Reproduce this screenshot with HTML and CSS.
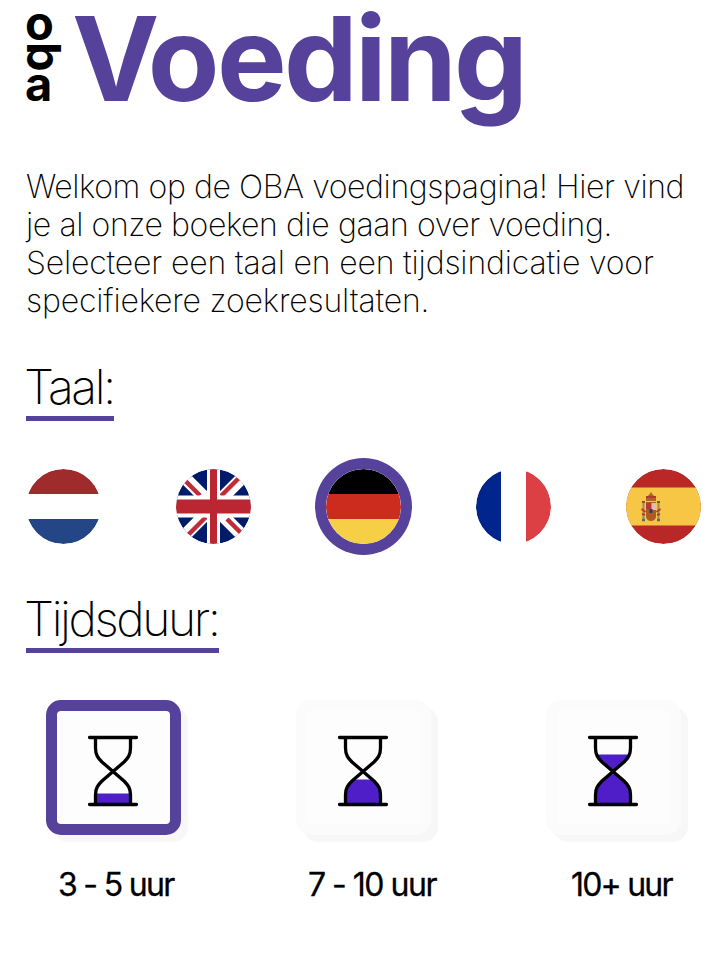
FILE: index.html
```
<!DOCTYPE html>
<html lang="nl">
<head>
<meta charset="utf-8">
<title>OBA Voeding</title>
<link rel="stylesheet" href="styles.css">
</head>
<body>
<svg class="defs" aria-hidden="true">
  <defs>
    <clipPath id="round"><circle cx="37.5" cy="37.5" r="37.5"/></clipPath>
    <g id="glass" fill="none" stroke="#000" stroke-width="3.300">
      <path d="M7.500 2V13C7.500 20 10 23 14 27L36 46C40 50 42.500 53 42.500 60V69M42.500 2V13C42.500 20 40 23 36 27L14 46C10 50 7.500 53 7.500 60V69"/>
      <path d="M1.500 2.500H48.500M1.500 69.500H48.500" stroke-linecap="round"/>
    </g>
    <clipPath id="glass-shape"><path d="M7.500 2V13C7.500 20 10 23 14 27L25 36.500 14 46C10 50 7.500 53 7.500 60V69H42.500V60C42.500 53 40 50 36 46L25 36.500 36 27C40 23 42.500 20 42.500 13V2Z"/></clipPath>
  </defs>
</svg>
<header class="header">
  <svg class="logo" viewBox="0 0 40 100" role="img" aria-label="oba">
    <text class="logo-letter" x="-1" y="31.500">o</text>
    <text class="logo-letter" transform="translate(0.500 34) rotate(90)" x="0" y="0">b</text>
    <text class="logo-letter" x="-1" y="93">a</text>
  </svg>
  <h1 class="title"><span class="title-initial">V</span>oeding</h1>
</header>
<main class="main">
  <p class="intro"><span class="tight">Welkom op de OBA voedingspagina! Hier vind<br>je al onze boeken die gaan over voeding.</span><br>Selecteer een taal en een tijdsindicatie voor<br>specifiekere zoekresultaten.</p>

  <h2 class="heading">Taal:</h2>
  <div class="flags">
    <svg class="flag" viewBox="0 0 75 75"><g clip-path="url(#round)"><path fill="#fff" d="M0 0h75v75H0z"/><path fill="#a02b2c" d="M0 0h75v25H0z"/><path fill="#244686" d="M0 50h75v25H0z"/></g></svg>
    <svg class="flag" viewBox="0 0 75 75"><g clip-path="url(#round)">
      <path fill="#001b69" d="M0 0h75v75H0z"/>
      <path stroke="#fff" stroke-width="12.500" d="M0 0L75 75M75 0L0 75"/>
      <path stroke="#c22b38" stroke-width="4.500" d="M0 2.500L24 26.500M72 0L45 27M3 75L30 48M51 50L76 75"/>
      <path fill="#fff" d="M31 0h13v75H31zM0 26.500h75v22H0z"/>
      <path fill="#ba2732" d="M34 0h7v75h-7zM0 30.500h75v14H0z"/>
    </g></svg>
    <svg class="flag flag-selected" viewBox="0 0 75 75"><g clip-path="url(#round)"><path d="M0 0h75v25H0z"/><path fill="#cc2c1e" d="M0 25h75v25H0z"/><path fill="#f7cf46" d="M0 50h75v25H0z"/></g></svg>
    <svg class="flag" viewBox="0 0 75 75"><g clip-path="url(#round)"><path fill="#fff" d="M25 0h25v75H25z"/><path fill="#00268e" d="M0 0h25v75H0z"/><path fill="#dc4044" d="M50 0h25v75H50z"/></g></svg>
    <svg class="flag" viewBox="0 0 75 75"><g clip-path="url(#round)">
      <path fill="#b92727" d="M0 0h75v75H0z"/><path fill="#f6c644" d="M0 18.500h75v38H0z"/>
      <path fill="#a9652c" d="M20 32V28L23 26 25 23 27 26 30 28V32Z"/>
      <path fill="#b33a2a" d="M20 27h10v2H20z"/>
      <path fill="#ad5a25" d="M20 33h10v15q-1 4-5 4t-5-4z"/>
      <path fill="#b73735" d="M20 34h5v6h-5z"/><path fill="#e6b9b4" d="M25.500 34H30v7h-4.500z"/>
      <path fill="#26415c" d="M23.500 40h3v4h-3z"/>
      <path stroke="#9b8a6a" stroke-width="2" d="M17.500 34v17M32.500 34v17"/>
      <path stroke="#b53b32" stroke-width="2" d="M15.500 40l4 3M34.500 40l-4 3M16 45l3 1M34 45l-3 1"/>
      <path stroke="#54706a" stroke-width="2.500" d="M16 51h3M31 51h3"/>
      <path stroke="#8a572b" stroke-width="2" d="M16 33h3M31 33h3"/>
    </g></svg>
  </div>

  <h2 class="heading heading-time">Tijdsduur:</h2>
  <div class="times">
    <div class="time">
      <div class="card card-selected"><svg class="hourglass" viewBox="0 0 50 72"><path clip-path="url(#glass-shape)" fill="#4f1ec8" d="M0 58.500h50V70H0z"/><use href="#glass"/></svg></div>
      <span class="label">3 - 5 uur</span>
    </div>
    <div class="time">
      <div class="card"><svg class="hourglass" viewBox="0 0 50 72"><path clip-path="url(#glass-shape)" fill="#4f1ec8" d="M0 44.500h50V70H0z"/><use href="#glass"/></svg></div>
      <span class="label label-middle">7 - 10 uur</span>
    </div>
    <div class="time">
      <div class="card"><svg class="hourglass" viewBox="0 0 50 72"><path clip-path="url(#glass-shape)" fill="#4f1ec8" d="M0 19.500h50V70H0z"/><use href="#glass"/></svg></div>
      <span class="label label-last">10+ uur</span>
    </div>
  </div>
</main>
</body>
</html>
```
FILE: styles.css
```
* { box-sizing: border-box; }
body {
  margin: 0;
  padding: 0 25px 0 26px;
  background: #fff;
  color: #000;
  font-family: "Inter", sans-serif;
}
.defs { display: block; width: 0; height: 0; }
.header { display: flex; height: 168px; }
.logo { flex: none; width: 40px; height: 100px; margin: 8px 6px 0 0; overflow: visible; }
.logo-letter { font-size: 47px; font-weight: 750; }
.title {
  margin: 0;
  color: #56429a;
  font-size: 117px;
  font-weight: 700;
  line-height: 118px;
  letter-spacing: -2.700px;
}
.title-initial { letter-spacing: -11.500px; }
.intro { margin: 0; font-size: 32px; font-weight: 200; line-height: 38px; letter-spacing: -0.170px; white-space: nowrap; }
.tight { letter-spacing: -0.410px; }
.heading {
  width: fit-content;
  height: 58px;
  margin: 43px 0 0;
  border-bottom: 5px solid #56429a;
  font-size: 48px;
  font-weight: 200;
  line-height: 48px;
  letter-spacing: -2.500px;
  text-indent: -2px;
  white-space: nowrap;
}
.flags { display: flex; justify-content: space-between; height: 75px; margin-top: 48px; }
.flag { width: 75px; height: 75px; border-radius: 50%; }
.flag-selected { box-shadow: 0 0 0 11px #56429a; }
.heading-time { margin-top: 51px; letter-spacing: -2.400px; }
.times { display: flex; gap: 115px; margin: 47px 0 0 20px; }
.time { width: 135px; }
.card {
  display: flex;
  align-items: center;
  justify-content: center;
  width: 135px;
  height: 135px;
  border: 11px solid #fbfbfb;
  border-radius: 15px;
  background: #fdfdfd;
  box-shadow: 7px 7px 0 #f7f7f7;
}
.card-selected { border-color: #56429a; }
.hourglass { width: 50px; height: 72px; margin: 6px 0 0 -1px; }
.label {
  display: block;
  margin: 30px 0 0 12px;
  font-size: 32px;
  font-weight: 400;
  line-height: 40px;
  letter-spacing: -1.700px;
  white-space: nowrap;
  -webkit-text-stroke: 0.300px #000;
}
.label-middle { letter-spacing: -1.500px; }
.label-last { margin-left: 25px; letter-spacing: -1.800px; }
```
